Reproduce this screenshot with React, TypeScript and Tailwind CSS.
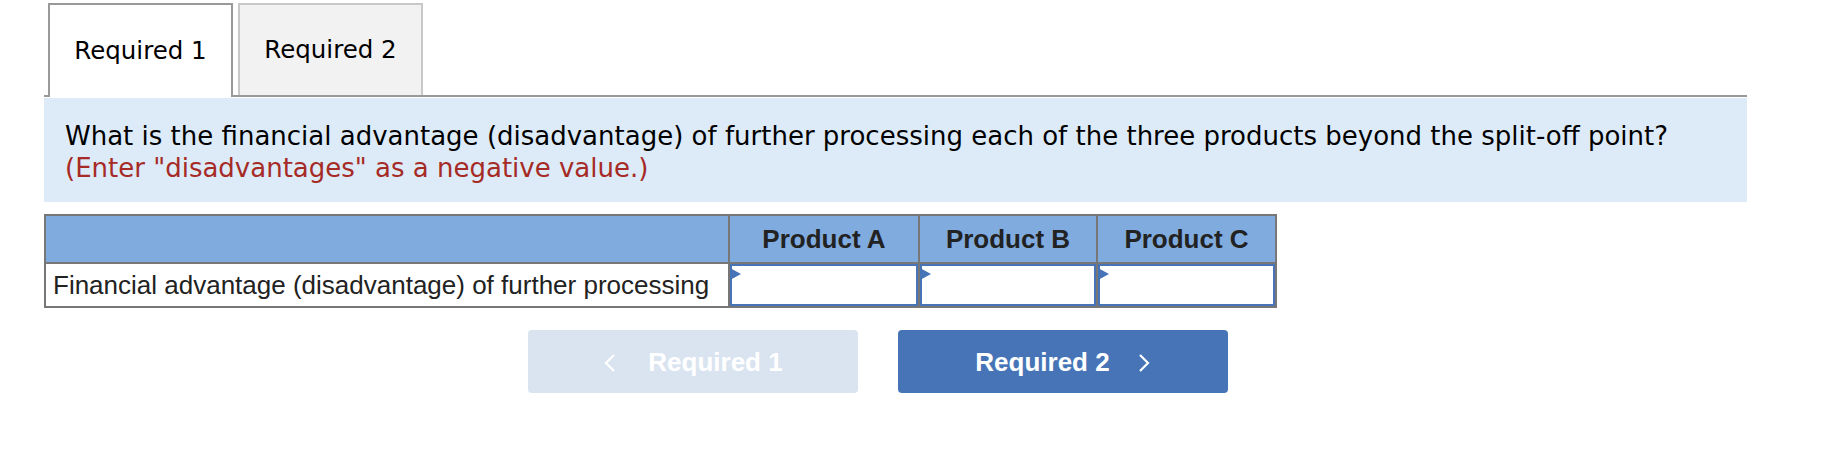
import React from "react";

const Chevron = ({ dir }: { dir: "left" | "right" }) => (
  <svg width="14" height="20" viewBox="0 0 14 20" className="shrink-0">
    {dir === "left" ? (
      <polyline points="11,2 3,10 11,18" fill="none" stroke="#ffffff" strokeWidth="2.2" />
    ) : (
      <polyline points="3,2 11,10 3,18" fill="none" stroke="#ffffff" strokeWidth="2.2" />
    )}
  </svg>
);

const InputCell = ({ w }: { w: string }) => (
  <div className={`${w} h-full border-l-2 border-[#777777]`}>
    <div className="relative h-full w-full border-2 border-[#4674b6] bg-white">
      <svg width="11" height="12" viewBox="0 0 11 12" className="absolute left-[-2px] top-[2px]">
        <polygon points="0,0 11,6 0,12" fill="#4674b6" />
      </svg>
    </div>
  </div>
);

export default function App() {
  return (
    <div className="min-h-[452px] w-[1844px] bg-white">
      <div className="w-[1747px] pl-[44px] pt-[3px]">
        {/* Tabs */}
        <div className="flex h-[94px] items-end gap-[5px] border-b-2 border-[#999999] pl-[4px]">
          <div
            className="relative z-10 -mb-[2px] flex h-[94px] w-[185px] items-center justify-center border-2 border-b-0 border-[#999999] bg-white text-[24.5px] text-black"
            style={{ fontFamily: '"DejaVu Sans", Verdana, sans-serif' }}
          >
            Required 1
          </div>
          <div
            className="flex h-[92px] w-[185px] items-center justify-center border-2 border-b-0 border-[#c8c8c8] bg-[#f2f2f2] text-[24.5px] text-black"
            style={{ fontFamily: '"DejaVu Sans", Verdana, sans-serif' }}
          >
            Required 2
          </div>
        </div>

        {/* Question panel */}
        <div
          className="mt-[1px] h-[104px] bg-[#ddebf8] px-[21px] pt-[22px] text-[26px] leading-[32px]"
          style={{ fontFamily: '"DejaVu Sans", Verdana, sans-serif' }}
        >
          <div className="whitespace-nowrap text-black">
            What is the financial advantage (disadvantage) of further processing each of the three products beyond the split-off point?
          </div>
          <div className="text-[#a62a26]">(Enter "disadvantages" as a negative value.)</div>
        </div>

        {/* Table */}
        <div
          className="mt-[12px] w-[1233px] border-2 border-[#777777]"
          style={{ fontFamily: '"Liberation Sans", Arial, sans-serif' }}
        >
          <div className="flex h-[46px] bg-[#80abdf] text-[26px] font-bold text-[#222222]">
            <div className="w-[682px]" />
            <div className="flex w-[190px] items-center justify-center border-l-2 border-[#777777]">Product A</div>
            <div className="flex w-[178px] items-center justify-center border-l-2 border-[#777777]">Product B</div>
            <div className="flex w-[179px] items-center justify-center border-l-2 border-[#777777]">Product C</div>
          </div>
          <div className="flex h-[44px] border-t-2 border-[#777777] text-[26px] text-[#222222]">
            <div className="flex w-[682px] items-center whitespace-nowrap bg-white pl-[7px]">
              Financial advantage (disadvantage) of further processing
            </div>
            <InputCell w="w-[190px]" />
            <InputCell w="w-[178px]" />
            <InputCell w="w-[179px]" />
          </div>
        </div>

        {/* Buttons */}
        <div
          className="mt-[22px] flex gap-[40px] pl-[484px] text-[26px] font-bold text-white"
          style={{ fontFamily: '"Liberation Sans", Arial, sans-serif' }}
        >
          <div className="flex h-[63px] w-[330px] items-center justify-center gap-[31px] rounded-[4px] bg-[#dae4f0] pt-[2px]">
            <Chevron dir="left" />
            <span>Required 1</span>
          </div>
          <div className="flex h-[63px] w-[330px] items-center justify-center gap-[27px] rounded-[4px] bg-[#4674b6] pt-[2px]">
            <span>Required 2</span>
            <Chevron dir="right" />
          </div>
        </div>
      </div>
    </div>
  );
}
